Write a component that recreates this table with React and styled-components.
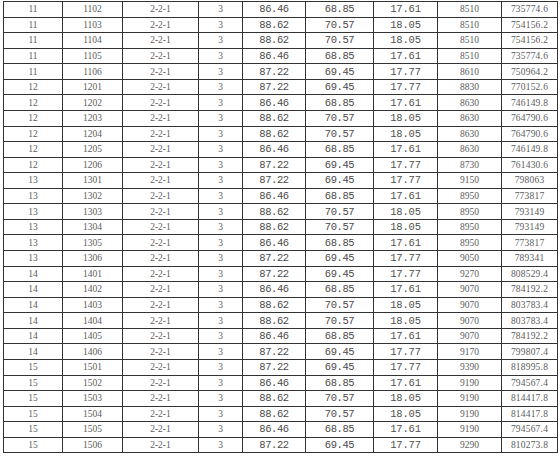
import React from 'react';
import styled, { createGlobalStyle } from 'styled-components';

const GlobalStyle = createGlobalStyle`
  html, body {
    margin: 0;
    padding: 0;
    background: #ffffff;
  }
`;

const Sheet = styled.div`
  width: 560px;
  height: 458px;
  overflow: hidden;
  padding-top: 1px;
  padding-left: 3px;
  box-sizing: border-box;
`;

const Table = styled.table`
  border-collapse: collapse;
  table-layout: fixed;
  width: 554px;
`;

const Row = styled.tr`
  height: 15.57px;
`;

const Cell = styled.td`
  border: 1px solid #333333;
  padding: 0;
  text-align: center;
  vertical-align: middle;
  line-height: 14px;
  white-space: nowrap;
  overflow: hidden;
  font-family: ${(p) => (p.$mono ? '"Liberation Mono", monospace' : '"Liberation Serif", serif')};
  font-size: ${(p) => p.$size || 9.5}px;
  letter-spacing: ${(p) => p.$ls || 0}px;
  color: ${(p) => p.$color || '#5c5c5c'};
`;

const widths = [59, 60, 76, 44, 63, 68, 64, 64, 56];

const data = [
  ['11', '1102', '86.46', '68.85', '17.61', '8510', '735774.6'],
  ['11', '1103', '88.62', '70.57', '18.05', '8510', '754156.2'],
  ['11', '1104', '88.62', '70.57', '18.05', '8510', '754156.2'],
  ['11', '1105', '86.46', '68.85', '17.61', '8510', '735774.6'],
  ['11', '1106', '87.22', '69.45', '17.77', '8610', '750964.2'],
  ['12', '1201', '87.22', '69.45', '17.77', '8830', '770152.6'],
  ['12', '1202', '86.46', '68.85', '17.61', '8630', '746149.8'],
  ['12', '1203', '88.62', '70.57', '18.05', '8630', '764790.6'],
  ['12', '1204', '88.62', '70.57', '18.05', '8630', '764790.6'],
  ['12', '1205', '86.46', '68.85', '17.61', '8630', '746149.8'],
  ['12', '1206', '87.22', '69.45', '17.77', '8730', '761430.6'],
  ['13', '1301', '87.22', '69.45', '17.77', '9150', '798063'],
  ['13', '1302', '86.46', '68.85', '17.61', '8950', '773817'],
  ['13', '1303', '88.62', '70.57', '18.05', '8950', '793149'],
  ['13', '1304', '88.62', '70.57', '18.05', '8950', '793149'],
  ['13', '1305', '86.46', '68.85', '17.61', '8950', '773817'],
  ['13', '1306', '87.22', '69.45', '17.77', '9050', '789341'],
  ['14', '1401', '87.22', '69.45', '17.77', '9270', '808529.4'],
  ['14', '1402', '86.46', '68.85', '17.61', '9070', '784192.2'],
  ['14', '1403', '88.62', '70.57', '18.05', '9070', '803783.4'],
  ['14', '1404', '88.62', '70.57', '18.05', '9070', '803783.4'],
  ['14', '1405', '86.46', '68.85', '17.61', '9070', '784192.2'],
  ['14', '1406', '87.22', '69.45', '17.77', '9170', '799807.4'],
  ['15', '1501', '87.22', '69.45', '17.77', '9390', '818995.8'],
  ['15', '1502', '86.46', '68.85', '17.61', '9190', '794567.4'],
  ['15', '1503', '88.62', '70.57', '18.05', '9190', '814417.8'],
  ['15', '1504', '88.62', '70.57', '18.05', '9190', '814417.8'],
  ['15', '1505', '86.46', '68.85', '17.61', '9190', '794567.4'],
  ['15', '1506', '87.22', '69.45', '17.77', '9290', '810273.8'],
];

export default function App() {
  return (
    <>
      <GlobalStyle />
      <Sheet>
        <Table>
          <colgroup>
            {widths.map((w, i) => (
              <col key={i} style={{ width: w }} />
            ))}
          </colgroup>
          <tbody>
            {data.map(([floor, room, area, inner, shared, price, total]) => (
              <Row key={room}>
                <Cell>{floor}</Cell>
                <Cell>{room}</Cell>
                <Cell>2-2-1</Cell>
                <Cell>3</Cell>
                <Cell $mono $size={10.5} $ls={-0.4} $color="#4a4a4a">{area}</Cell>
                <Cell $mono $size={10.5} $ls={-0.4} $color="#4a4a4a">{inner}</Cell>
                <Cell $mono $size={10.5} $ls={-0.2} $color="#505050">{shared}</Cell>
                <Cell>{price}</Cell>
                <Cell $size={9.5} $ls={0.2}>{total}</Cell>
              </Row>
            ))}
          </tbody>
        </Table>
      </Sheet>
    </>
  );
}
